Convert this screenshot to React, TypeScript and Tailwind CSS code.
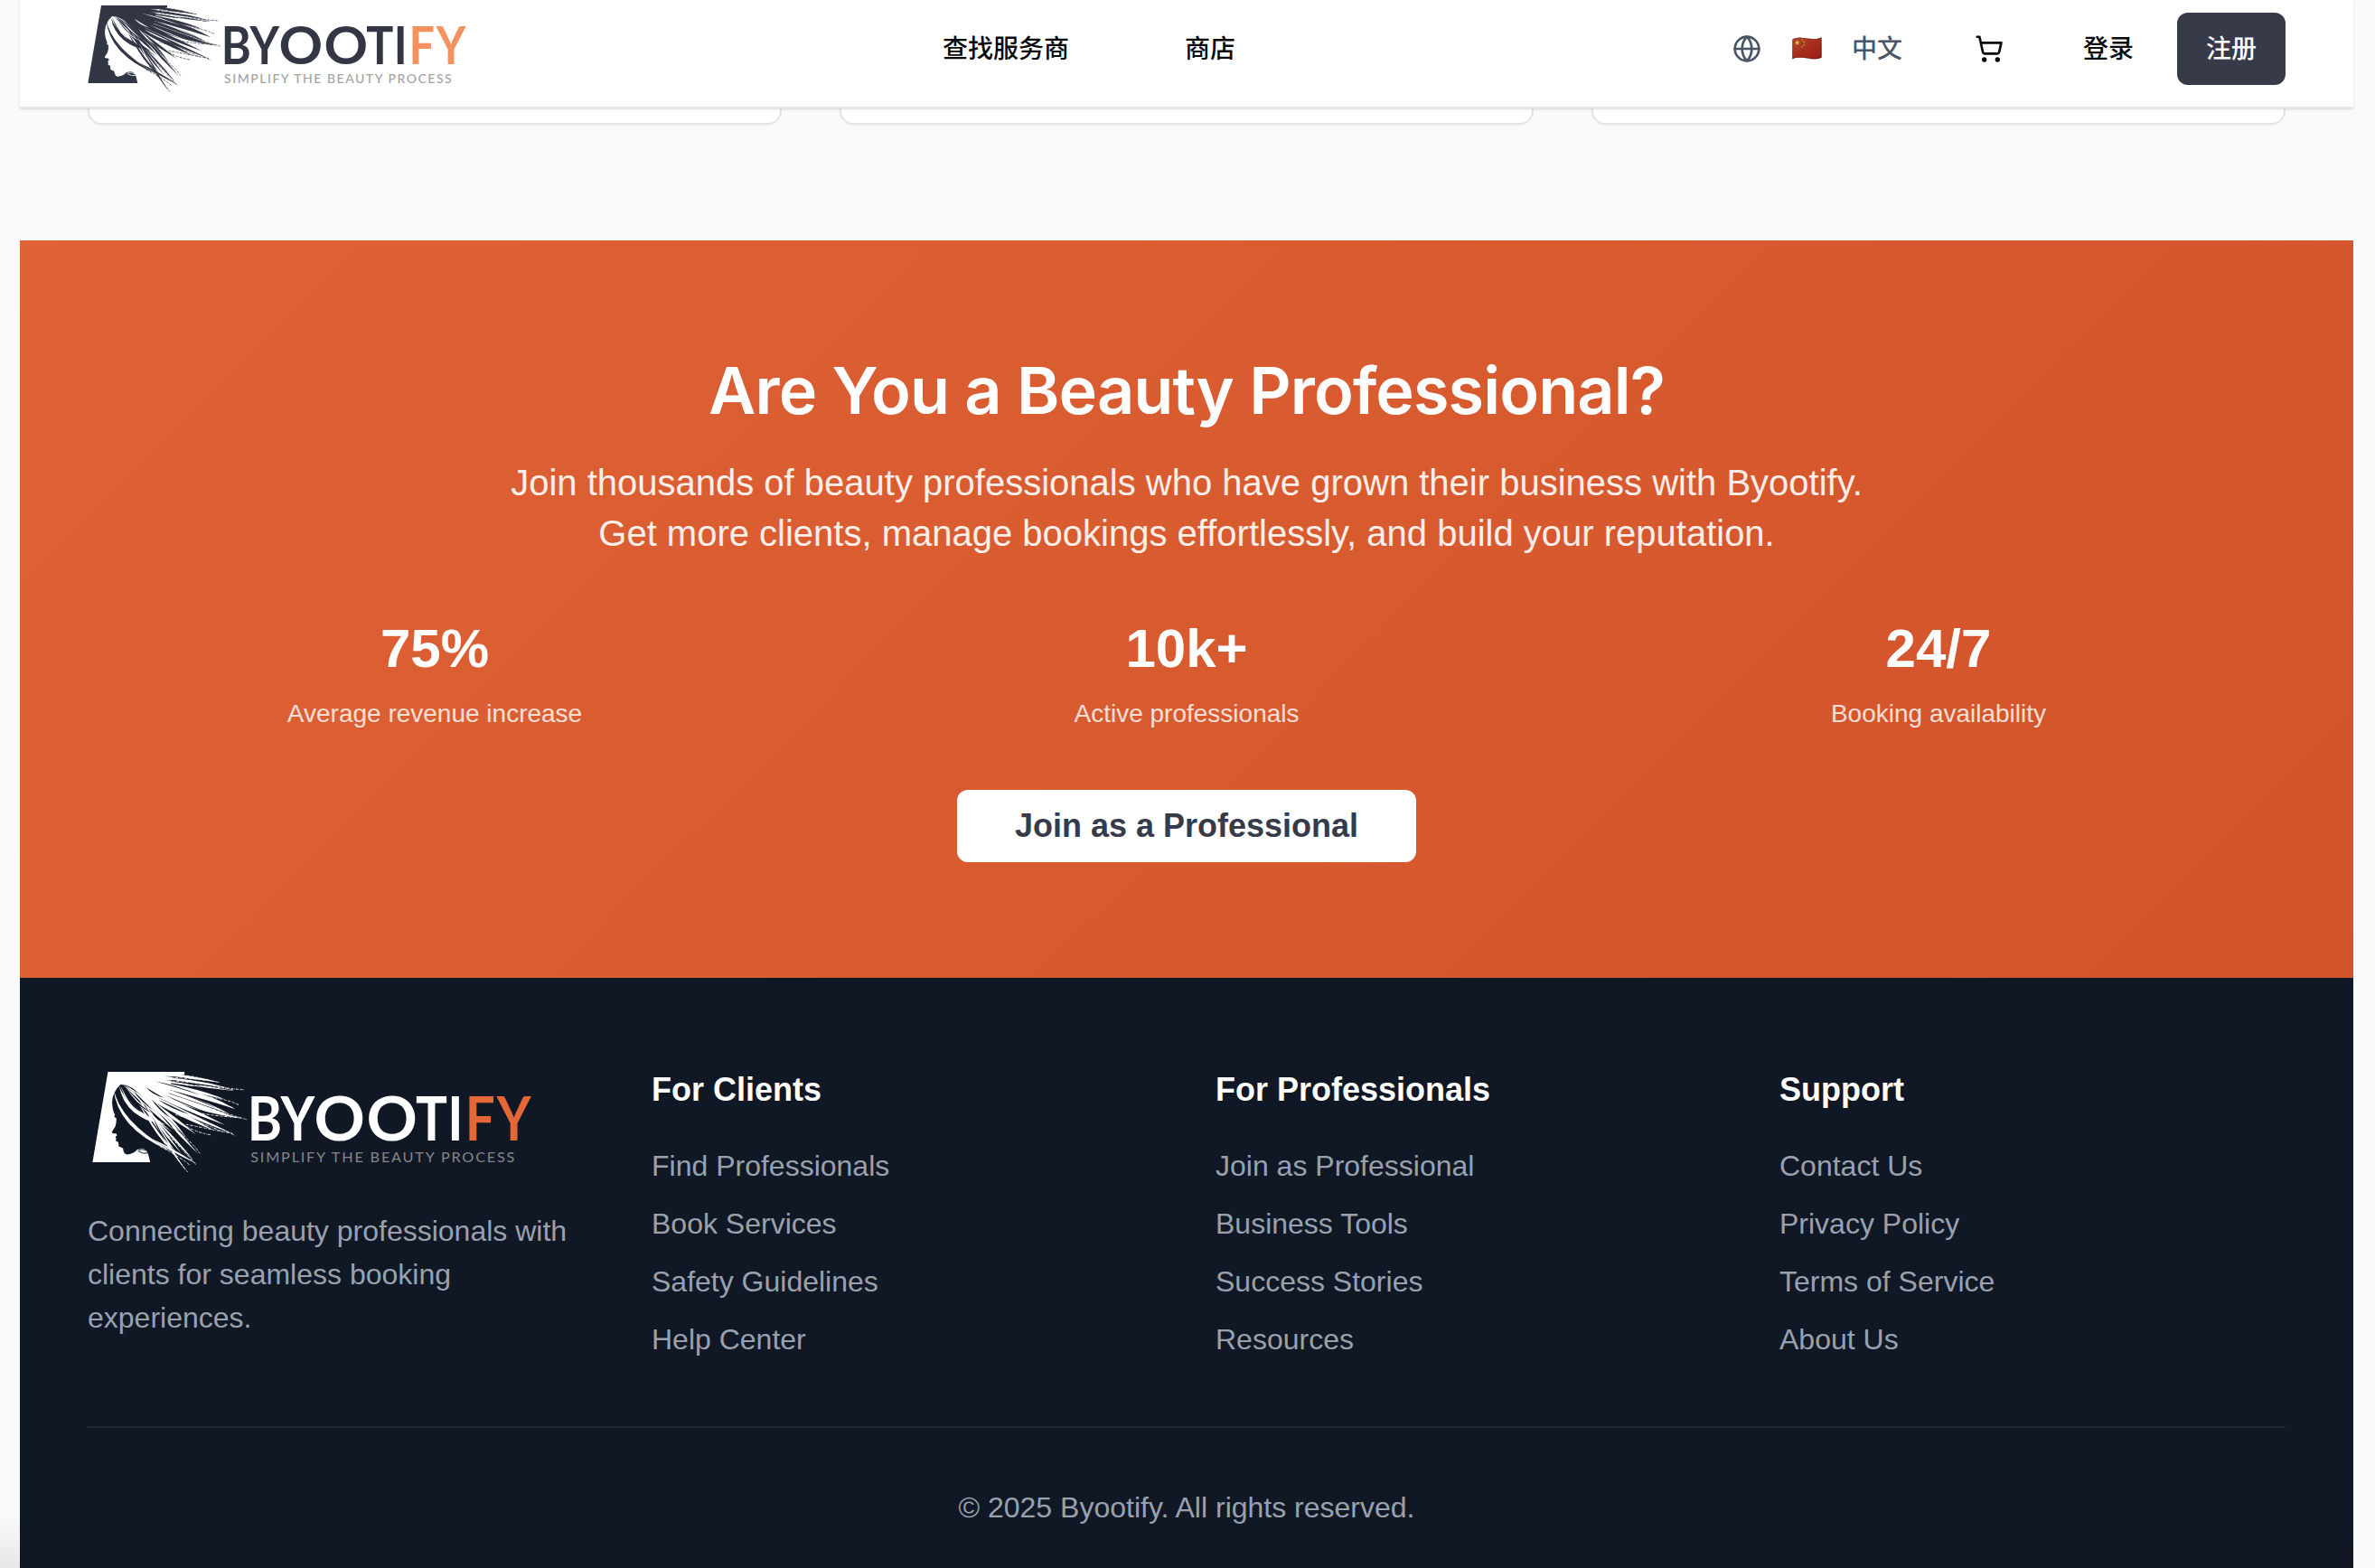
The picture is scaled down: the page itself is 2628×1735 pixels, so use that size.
import { Globe, ShoppingCart } from "lucide-react";

type Strand = [number, number, number, number, number, number, number];

// start x/y, control x/y, tip x/y, thickness
const hair: Strand[] = [
  [150, 22, 250, 20, 345, 42, 14],
  [160, 24, 290, 26, 386, 48, 14],
  [170, 30, 300, 40, 412, 64, 14],
  [150, 36, 300, 54, 428, 72, 10],
  [160, 40, 310, 66, 400, 96, 18],
  [150, 45, 330, 76, 430, 124, 26],
  [140, 45, 300, 86, 414, 138, 20],
  [140, 48, 290, 102, 420, 144, 18],
  [140, 50, 280, 116, 452, 152, 20],
  [130, 50, 270, 112, 402, 170, 22],
  [130, 52, 250, 122, 418, 192, 20],
  [125, 54, 240, 124, 372, 186, 22],
  [125, 54, 220, 124, 318, 196, 20],
  [120, 52, 220, 112, 338, 166, 22],
  [112, 54, 190, 104, 272, 188, 18],
  [110, 56, 180, 110, 300, 222, 18],
  [150, 70, 230, 124, 290, 206, 16],
  [180, 90, 230, 150, 324, 252, 16],
  [160, 90, 210, 170, 276, 250, 15],
  [140, 70, 190, 150, 262, 250, 16],
  [190, 130, 220, 200, 290, 302, 15],
  [150, 100, 190, 170, 246, 240, 12],
  [98, 58, 124, 140, 232, 168, 26],
  [102, 58, 150, 160, 220, 160, 22],
  [82, 64, 100, 172, 250, 246, 22],
  [190, 208, 250, 240, 322, 282, 12],
  [200, 150, 250, 200, 312, 272, 12],
  [120, 66, 160, 120, 250, 190, 12],
  [172, 132, 206, 196, 254, 246, 14],
];

const gaps: Strand[] = [
  [106, 62, 130, 112, 160, 132, 9],
  [118, 64, 142, 108, 190, 134, 8],
  [138, 70, 158, 96, 196, 128, 8],
  [176, 62, 194, 78, 226, 92, 8],
  [190, 96, 214, 124, 246, 150, 9],
  [210, 98, 246, 118, 300, 140, 8],
  [200, 44, 260, 58, 330, 84, 5],
  [230, 40, 290, 46, 360, 68, 6],
  [250, 72, 310, 88, 380, 124, 5],
  [230, 84, 280, 108, 360, 138, 5],
  [228, 30, 280, 32, 330, 46, 5],
  [216, 140, 244, 166, 274, 208, 8],
  [196, 150, 214, 190, 240, 224, 8],
  [270, 150, 310, 164, 350, 184, 5],
];

const wisps = [
  "M215 27Q280 22 340 38",
  "M220 34Q310 34 386 48",
  "M250 44Q340 48 425 70",
  "M290 56Q360 60 455 69",
  "M320 86Q400 92 440 112",
  "M330 112Q400 136 466 155",
  "M310 132Q380 146 440 148",
  "M300 142Q370 170 430 200",
  "M290 168Q350 180 424 194",
  "M270 160Q310 190 360 198",
  "M250 176Q300 210 330 252",
  "M240 200Q280 240 318 284",
  "M226 220Q260 260 294 304",
  "M216 232Q262 254 300 284",
  "M260 140Q330 160 396 190",
];

const taper = ([x0, y0, cx, cy, x1, y1, w]: Strand) =>
  `M${x0} ${y0}Q${cx} ${cy - w / 2} ${x1} ${y1}Q${cx - w / 3} ${cy + w / 2} ${x0} ${y0}Z`;

function Logo({ className, ink, paper, accent, tagline }: { className: string; ink: string; paper: string; accent: string; tagline: string }) {
  return (
    <svg viewBox="21 0 1269 330" className={className} role="img" aria-label="Byootify">
      <path
        fill={ink}
        d="M66 18H285V25L250 34L240 80L200 96L160 74L118 56L102 54Q78 76 78 106Q79 128 86 140L84 146L90 150Q91 164 87 174L77 190Q78 194 90 194L92 200L87 204L90 209L88 214L96 219L97 231L109 236Q111 254 122 254Q140 252 150 240L164 237Q178 240 181 252L187 276H22Z"
      />
      {hair.map((s, i) => (
        <path key={i} fill={ink} d={taper(s)} />
      ))}
      {gaps.map((s, i) => (
        <path key={i} fill={paper} d={taper(s)} />
      ))}
      <g fill="none" stroke={ink} strokeWidth="2.4" strokeDasharray="5 2 2 3 8 3 1 2">
        {wisps.map((d) => (
          <path key={d} d={d} />
        ))}
      </g>
      <path d="M152 244Q166 254 181 250M154 241Q170 236 180 247" fill="none" stroke={paper} strokeWidth="2.5" />
      <g fontFamily="Lato, sans-serif" fontWeight="700" fontSize="171" fill={ink}>
        <text y="213" x="528 636" transform="scale(.88 1)">
          BY
        </text>
        <text y="213" x="621.4 763.6" transform="scale(1.055 1)">
          OO
        </text>
        <text y="213" x="1075 1179" transform="scale(.88 1)">
          TI
        </text>
        <text y="213" x="1236 1338.6" transform="scale(.88 1)" fill={accent}>
          FY
        </text>
      </g>
      <text x="474" y="276" fontFamily="Lato, sans-serif" fontSize="42" fill={tagline} textLength="755" lengthAdjust="spacing">
        SIMPLIFY THE BEAUTY PROCESS
      </text>
    </svg>
  );
}

const stats = [
  { value: "75%", label: "Average revenue increase" },
  { value: "10k+", label: "Active professionals" },
  { value: "24/7", label: "Booking availability" },
];

const columns = [
  { title: "For Clients", links: ["Find Professionals", "Book Services", "Safety Guidelines", "Help Center"] },
  { title: "For Professionals", links: ["Join as Professional", "Business Tools", "Success Stories", "Resources"] },
  { title: "Support", links: ["Contact Us", "Privacy Policy", "Terms of Service", "About Us"] },
];

function Header() {
  return (
    <header className="relative z-10 flex h-[120px] items-start border-b-2 border-gray-200 bg-white px-[75px] font-['Liberation_Sans','Noto_Sans_CJK_SC',sans-serif] text-[28px] leading-[40px] font-medium text-[#0a0a0a] shadow-sm">
      <div className="w-[946px] shrink-0">
        <Logo className="h-[110px] w-[423px]" ink="#333745" paper="#ffffff" accent="#f3925f" tagline="#a3a3a3" />
      </div>
      <nav className="flex h-[108px] items-center gap-32 pt-0.5">
        <a>查找服务商</a>
        <a>商店</a>
      </nav>
      <div className="ml-auto flex h-[108px] items-center">
        <div className="flex items-center text-gray-600">
          <Globe className="size-8" />
          <span className="ml-[33px] w-[67px] brightness-90 saturate-75">🇨🇳</span>
          <span className="pt-0.5">中文</span>
        </div>
        <ShoppingCart className="ml-20 size-8 [&_circle]:fill-current" />
        <a className="ml-[88px] pt-0.5">登录</a>
        <button className="ml-12 h-20 rounded-xl bg-[#373a49] px-8 pt-0.5 text-white">注册</button>
      </div>
    </header>
  );
}

export default function App() {
  return (
    <div className="relative h-[1735px] overflow-hidden bg-[#f8fafc] pr-6 pl-[22px] font-['Liberation_Sans',Arial,sans-serif]">
      <Header />
      <section className="grid h-[146px] grid-cols-3 items-start gap-16 bg-gray-50 px-[75px]">
        {stats.map((s) => (
          <div key={s.label} className="h-[18px] rounded-b-2xl border-2 border-t-0 border-[#e5e5e5] bg-white shadow-xs" />
        ))}
      </section>

      <section className="flex h-[816px] flex-col items-center bg-linear-135 from-[#df6336] to-[#d25229] px-[75px] pt-[126px] text-center text-white">
        <h2 className="font-[Inter] text-[72px] leading-[80px] font-semibold tracking-[-0.9px]">Are You a Beauty Professional?</h2>
        <p className="mt-[34px] w-[1536px] text-[40px] leading-[56px] text-white/90">
          Join thousands of beauty professionals who have grown their business with Byootify. Get more clients, manage bookings effortlessly, and build your reputation.
        </p>
        <div className="mt-16 grid w-full grid-cols-3 gap-16">
          {stats.map((s) => (
            <div key={s.label}>
              <div className="text-[60px] leading-[72px] font-bold">{s.value}</div>
              <div className="mt-4 text-[28px] leading-[40px] text-white/80">{s.label}</div>
            </div>
          ))}
        </div>
        <button className="mt-16 h-20 rounded-xl bg-white px-16 text-[36px] leading-[56px] font-bold text-[#373a49]">Join as a Professional</button>
      </section>

      <footer className="h-[653px] bg-[#111825] px-[75px] pt-24 text-[32px] leading-[48px] text-gray-400">
        <div className="grid grid-cols-4 gap-16">
          <div>
            <Logo className="mt-px ml-[5px] h-[128px] w-[491px]" ink="#ffffff" paper="#111825" accent="#e56636" tagline="#85858a" />
            <p className="mt-[31px]">Connecting beauty professionals with clients for seamless booking experiences.</p>
          </div>
          {columns.map((c) => (
            <div key={c.title}>
              <h3 className="text-[36px] leading-[56px] font-bold text-white">{c.title}</h3>
              <ul className="mt-8 flex flex-col gap-4">
                {c.links.map((l) => (
                  <li key={l}>{l}</li>
                ))}
              </ul>
            </div>
          ))}
        </div>
        <div className="mt-[72px] border-t-2 border-[#212736] pt-16 text-center">© 2025 Byootify. All rights reserved.</div>
      </footer>
      <div className="pointer-events-none absolute right-6 bottom-0 left-0 h-14 bg-linear-to-b from-transparent to-black/8" />
    </div>
  );
}
